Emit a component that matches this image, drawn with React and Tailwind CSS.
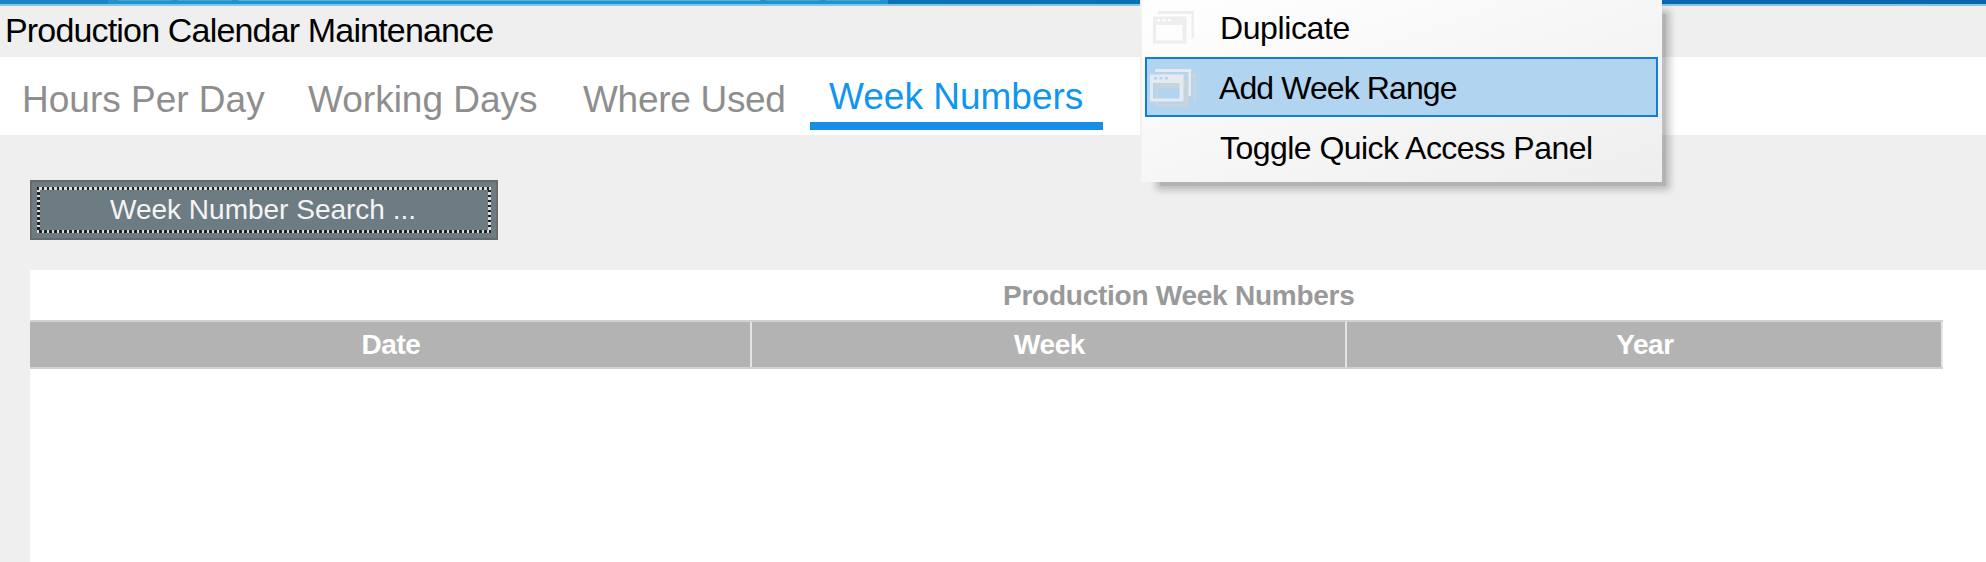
const tabs = [
  { label: "Hours Per Day", cls: "ml-[22px] w-[243px]" },
  { label: "Working Days", cls: "ml-[43px] w-[230px]" },
  { label: "Where Used", cls: "ml-[45px] w-[202px] tracking-[-0.3px]" },
];

const columns = ["Date", "Week", "Year"];

function WindowShape() {
  return (
    <g>
      <path d="M5 0H41V27H38.500V3H5Z" />
      <path fillRule="evenodd" d="M0 5.500H33.500V32.500H0ZM3 14H29.500V29.500H3ZM4 8V10.500H7V8ZM9.500 8V10.500H12.500V8ZM15 8V10.500H18V8Z" />
    </g>
  );
}

function WindowsIcon() {
  return (
    <svg width="41" height="33" viewBox="0 0 41 33" className="shrink-0" fill="#eeeeee">
      <WindowShape />
    </svg>
  );
}

function RaisedWindowsIcon() {
  return (
    <svg width="46" height="38" viewBox="0 0 46 38" className="shrink-0">
      <g transform="translate(5 5)" fill="#cbd3da">
        <WindowShape />
      </g>
      <g fill="#e4eaef">
        <WindowShape />
      </g>
    </svg>
  );
}

export default function App() {
  return (
    <div className="relative flex h-[562px] w-[1986px] flex-col overflow-hidden bg-[#efefef] font-['Liberation_Sans',sans-serif] whitespace-nowrap">
      <div className="flex h-[6px] shrink-0 border-b-2 border-[#8cc3e2] bg-linear-to-r from-[#0f7dbb] to-[#0668a8]">
        <div className="w-[108px] bg-[#1a85c2]" />
        <div className="flex w-[780px] gap-[6px] bg-[#1e94ce] pl-[10px]">
          <div className="h-px w-[54px] bg-[#4ba3cc]" />
          <div className="h-px w-[54px] bg-[#4ba3cc]" />
          <div className="h-px w-[522px] bg-[#5bb0d8]" />
          <div className="h-px w-[54px] bg-[#4ba3cc]" />
          <div className="h-px w-[54px] bg-[#4ba3cc]" />
        </div>
      </div>
      <div className="h-[51px] shrink-0 pl-[5px] pt-[5px] text-[34px] leading-[39px] tracking-[-0.83px] text-black">
        <span>Production Calendar Maintenance</span>
      </div>
      <nav className="flex h-[78px] shrink-0 bg-white text-[37px] text-[#8e8e8e]">
        {tabs.map((t) => (
          <div key={t.label} className={"pt-[22px] leading-[42px] " + t.cls}>
            <span>{t.label}</span>
          </div>
        ))}
        <div className="ml-[25px] h-[73px] w-[293px] border-b-8 border-[#168fe8] pl-[19px] pt-[19px] leading-[42px] text-[#0f96f0]">
          <span>Week Numbers</span>
        </div>
      </nav>
      <main className="flex grow flex-col pl-[30px] pt-[45px]">
        <button className="h-[60px] w-[468px] shrink-0 border-2 border-[#666a6c] bg-[#6d7b83] p-[5px] text-[28px] text-[#f4f4f4]">
          <div className="flex h-full flex-col">
            <div className="h-[3px] shrink-0 bg-[repeating-linear-gradient(90deg,#222_0px,#222_2.5px,#ddd_2.5px,#ddd_5px)]" />
            <div className="flex grow items-center">
              <div className="w-[3px] self-stretch bg-[repeating-linear-gradient(180deg,#ddd_0px,#ddd_2.5px,#222_2.5px,#222_5px)]" />
              <span className="grow pl-[70px] text-left leading-[40px]">Week Number Search ...</span>
              <div className="w-[3px] self-stretch bg-[repeating-linear-gradient(180deg,#222_0px,#222_2.5px,#ddd_2.5px,#ddd_5px)]" />
            </div>
            <div className="h-[3px] shrink-0 bg-[repeating-linear-gradient(90deg,#ddd_0px,#ddd_2.5px,#222_2.5px,#222_5px)]" />
          </div>
        </button>
        <section className="mt-[30px] grow bg-white font-bold">
          <h2 className="flex h-[50px] items-center pl-[973px] pt-px text-[28px] tracking-[-0.25px] text-[#999]">
            <span>Production Week Numbers</span>
          </h2>
          <div className="grid h-[49px] w-[1913px] grid-cols-[722px_595px_596px] border-y-2 border-[#d2d2d2] bg-[#b3b3b3] text-[28px] tracking-[-0.4px] text-white">
            {columns.map((c) => (
              <div key={c} className="flex items-center justify-center border-r-2 border-[#e4e4e4] pt-px pl-[2px]">
                <span>{c}</span>
              </div>
            ))}
          </div>
        </section>
      </main>
      <div className="absolute top-[14px] left-[1160px] h-[172px] w-[506px] bg-black/25 shadow-[0_0_7px_4px_rgba(0,0,0,0.22)]" />
      <div className="absolute left-[1140px] top-0 h-[182px] w-[522px] border-l-2 border-[#f1f1f1] bg-linear-to-br from-white to-[#eeeeee] text-[32px] text-black">
        <div className="flex h-[57px] pl-[11px]">
          <div className="w-[41px] pt-[11px]">
            <WindowsIcon />
          </div>
          <span className="ml-[26px] pt-[10px] leading-[37px] tracking-[-0.4px]">Duplicate</span>
        </div>
        <div className="ml-[3px] flex h-[60px] w-[513px] border-2 border-[#0f7fda] bg-[#b1d5f1] pl-[3px]">
          <div className="w-[46px] pt-[10px]">
            <RaisedWindowsIcon />
          </div>
          <span className="ml-[23px] pt-px leading-[57px] tracking-[-0.9px]">Add Week Range</span>
        </div>
        <div className="pl-[78px] leading-[63px] tracking-[-0.54px]">
          <span>Toggle Quick Access Panel</span>
        </div>
      </div>
    </div>
  );
}
